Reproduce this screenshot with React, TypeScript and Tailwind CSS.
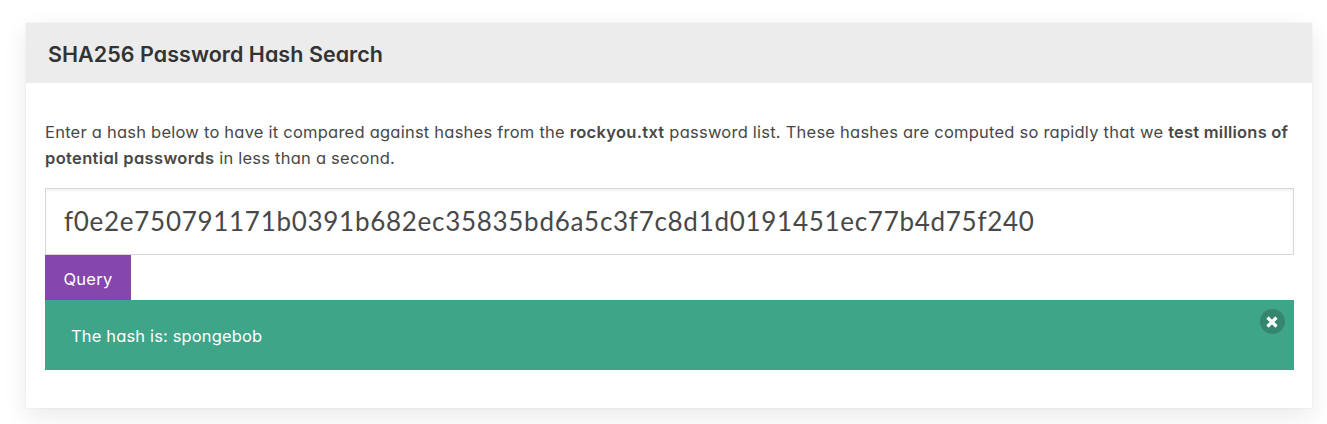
export default function App() {
  return (
    <main className="h-[424px] overflow-hidden bg-white px-[26px] pt-[23px] font-['Inter','Liberation_Sans',sans-serif] text-[#484848] [font-feature-settings:'cv11']">
      <section className="h-[385px] w-[1286px] bg-white shadow-[0_8px_24px_rgba(0,0,0,0.09),0_0_1px_rgba(0,0,0,0.12)]">
        <header className="flex h-[60px] items-center bg-[#ececec] px-[22px] pt-[3px]">
          <h1 className="whitespace-nowrap text-[21.5px] font-semibold tracking-[0.04px] text-[#333]">SHA256 Password Hash Search</h1>
        </header>
        <div className="pt-9 pr-[18px] pl-[19px] text-[16.5px]">
          <p className="h-[69px] whitespace-nowrap leading-[26px] tracking-[0.23px]">
            Enter a hash below to have it compared against hashes from the <strong className="font-semibold tracking-[0.3px]">rockyou.txt</strong> password list. These hashes are computed so rapidly that we <strong className="font-semibold">test millions of</strong>
            <br />
            <strong className="font-semibold tracking-[0.35px]">potential passwords</strong> in less than a second.
          </p>
          <input
            type="text"
            aria-label="Hash"
            defaultValue="f0e2e750791171b0391b682ec35835bd6a5c3f7c8d1d0191451ec77b4d75f240"
            className="block h-[67px] w-full border border-[#d8d8d8] px-[18px] pb-0.5 font-['Lato'] text-[26px] tracking-[0.715px] shadow-[inset_0_2px_3px_rgba(0,0,0,0.05)] outline-none"
          />
          <button className="block h-[45px] w-[86px] bg-[#8547ad] pt-1 tracking-[0.3px] text-white">Query</button>
          <div className="flex h-[70px] items-start justify-between bg-[#3fa588] pr-[9px] pl-[26px] text-white">
            <p className="pt-[23px] leading-[26px] tracking-[0.15px]">The hash is: spongebob</p>
            <button aria-label="Dismiss" className="mt-[9px] flex size-[25px] items-center justify-center rounded-full bg-[#36866f] pr-px">
              <svg viewBox="0 0 12 12" className="size-3" fill="none" stroke="currentColor" strokeWidth="3.2"><path d="M1.5 1.5 10.5 10.5M10.5 1.5 1.5 10.5" /></svg>
            </button>
          </div>
        </div>
      </section>
    </main>
  );
}
